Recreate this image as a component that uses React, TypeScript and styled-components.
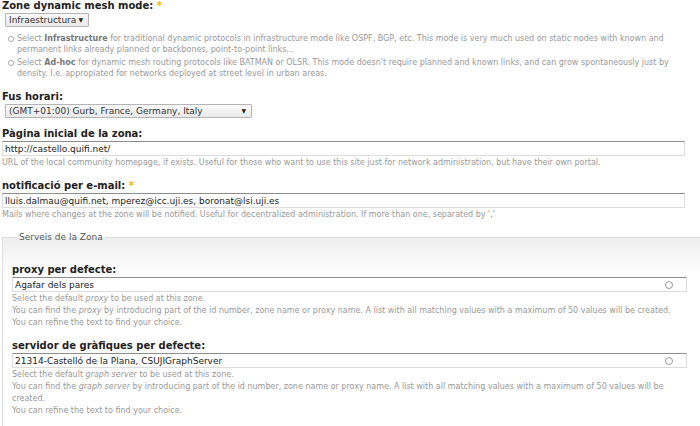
import React from 'react'
import styled, { createGlobalStyle } from 'styled-components'

const GlobalStyle = createGlobalStyle`
  html, body {
    margin: 0;
    padding: 0;
    background: #fff;
    overflow: hidden;
  }
  body {
    font-family: "DejaVu Sans", Verdana, sans-serif;
    color: #222;
  }
`

const Page = styled.div`
  width: 700px;
  height: 426px;
  padding: 0 0 0 2px;
  box-sizing: border-box;
  overflow: hidden;
`

const FormItem = styled.div<{ $gap?: number }>`
  margin-bottom: ${(p) => p.$gap ?? 11}px;
`

const Label = styled.label`
  display: block;
  font-size: 10px;
  font-weight: bold;
  line-height: 12px;
  color: #222;
  margin-bottom: 1px;
`

const Required = styled.span`
  color: #f5b400;
  font-weight: bold;
`

const SelectWrap = styled.div<{ $width: number }>`
  position: relative;
  width: ${(p) => p.$width}px;
  margin-left: 3px;

  &::after {
    content: '▼';
    position: absolute;
    right: 6px;
    top: 3px;
    font-size: 6px;
    color: #222;
    pointer-events: none;
  }
`

const Select = styled.select`
  appearance: none;
  display: block;
  width: 100%;
  height: 14px;
  margin: 0;
  padding: 0 0 0 3px;
  border: 1px solid #b5b5b5;
  border-radius: 1px;
  background: linear-gradient(#fafafa, #e9e9e9);
  font-family: inherit;
  font-size: 9px;
  line-height: 12px;
  color: #333;
`

const Options = styled.ul`
  list-style: none;
  margin: 6px 0 0;
  padding: 0 0 0 15px;
`

const Option = styled.li`
  position: relative;
  font-size: 8px;
  line-height: 11px;
  color: #999;
  margin-bottom: 2px;

  &:last-child {
    margin-bottom: 0;
  }

  &::before {
    content: '';
    position: absolute;
    left: -9px;
    top: 3px;
    width: 4px;
    height: 4px;
    border: 1px solid #aaa;
    border-radius: 50%;
  }

  strong {
    color: #777;
  }
`

const TextInput = styled.input<{ $width: number }>`
  display: block;
  box-sizing: border-box;
  width: ${(p) => p.$width}px;
  height: 15px;
  margin: 0;
  padding: 0 0 0 2px;
  border: 1px solid #ddd;
  border-top: 1px solid #8e8e8e;
  background: #fff;
  font-family: inherit;
  font-size: 9px;
  color: #222;
`

const AutoWrap = styled.div`
  position: relative;
  width: 675px;
`

const Throbber = styled.span`
  position: absolute;
  right: 14px;
  top: 4px;
  width: 6px;
  height: 6px;
  border: 1px solid #999;
  border-radius: 50%;
`

const Description = styled.div`
  font-size: 8px;
  line-height: 12px;
  color: #999;
  margin-top: 1px;

  em {
    font-style: italic;
  }
`

const Fieldset = styled.fieldset`
  margin: 0 -30px 0 0;
  padding: 21px 32px 0 9px;
  border: 1px solid #ddd;
  border-bottom: none;
  background: linear-gradient(#eeeeee 0px, #ffffff 38px);
`

const Legend = styled.legend`
  font-size: 9px;
  line-height: 11px;
  color: #555;
  padding: 0 2px;
  margin-left: 5px;
`

export default function App() {
  return (
    <Page>
      <GlobalStyle />
      <FormItem $gap={12}>
        <Label>
          Zone dynamic mesh mode: <Required>*</Required>
        </Label>
        <SelectWrap $width={84}>
          <Select defaultValue="infra">
            <option value="infra">Infraestructura</option>
            <option value="adhoc">Ad-hoc</option>
          </Select>
        </SelectWrap>
        <Options>
          <Option>
            Select <strong>Infrastructure</strong> for traditional dynamic protocols in infrastructure mode like
            OSPF, BGP, etc. This mode is very much used on static nodes with known and permanent links already
            planned or backbones, point-to-point links...
          </Option>
          <Option>
            Select <strong>Ad-hoc</strong> for dynamic mesh routing protocols like BATMAN or OLSR. This mode
            doesn't require planned and known links, and can grow spontaneously just by density. I.e. appropiated
            for networks deployed at street level in urban areas.
          </Option>
        </Options>
      </FormItem>

      <FormItem $gap={10}>
        <Label>Fus horari:</Label>
        <SelectWrap $width={247}>
          <Select defaultValue="cet">
            <option value="cet">(GMT+01:00) Gurb, France, Germany, Italy</option>
          </Select>
        </SelectWrap>
      </FormItem>

      <FormItem $gap={11}>
        <Label>Pàgina inicial de la zona:</Label>
        <TextInput $width={683} defaultValue="http://castello.quifi.net/" />
        <Description>
          URL of the local community homepage, if exists. Useful for those who want to use this site just for
          network administration, but have their own portal.
        </Description>
      </FormItem>

      <FormItem $gap={11}>
        <Label>
          notificació per e-mail: <Required>*</Required>
        </Label>
        <TextInput $width={683} defaultValue="lluis.dalmau@quifi.net, mperez@icc.uji.es, boronat@lsi.uji.es" />
        <Description>
          Mails where changes at the zone will be notified. Useful for decentralized administration. If more than
          one, separated by ','
        </Description>
      </FormItem>

      <Fieldset>
        <Legend>Serveis de la Zona</Legend>
        <FormItem $gap={11}>
          <Label>proxy per defecte:</Label>
          <AutoWrap>
            <TextInput $width={675} defaultValue="Agafar dels pares" />
            <Throbber />
          </AutoWrap>
          <Description>
            Select the default <em>proxy</em> to be used at this zone.
            <br />
            You can find the <em>proxy</em> by introducing part of the id number, zone name or proxy name. A list
            with all matching values with a maximum of 50 values will be created.
            <br />
            You can refine the text to find your choice.
          </Description>
        </FormItem>
        <FormItem $gap={11}>
          <Label>servidor de gràfiques per defecte:</Label>
          <AutoWrap>
            <TextInput $width={675} defaultValue="21314-Castelló de la Plana, CSUJIGraphServer" />
            <Throbber />
          </AutoWrap>
          <Description>
            Select the default <em>graph server</em> to be used at this zone.
            <br />
            You can find the <em>graph server</em> by introducing part of the id number, zone name or proxy name.
            A list with all matching values with a maximum of 50 values will be created.
            <br />
            You can refine the text to find your choice.
          </Description>
        </FormItem>
      </Fieldset>
    </Page>
  )
}
